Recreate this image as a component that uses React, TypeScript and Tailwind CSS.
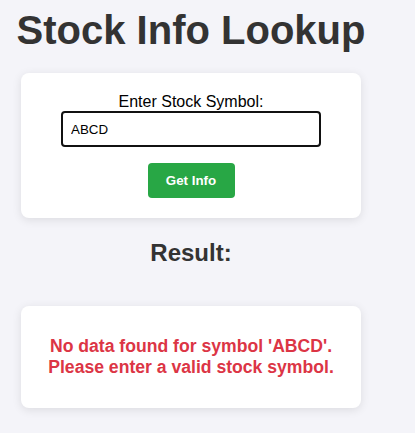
import { useState } from "react";

export default function App() {
  const [symbol, setSymbol] = useState("ABCD");

  return (
    <div className="min-h-[433px] bg-[#f4f4f9] font-['Liberation_Sans',Arial,sans-serif] text-[#333]">
      <div className="w-[382px] flex flex-col items-center pt-[7px]">
        <h1 className="text-[40px] leading-[46px] font-bold whitespace-nowrap text-[#333]">
          Stock Info Lookup
        </h1>

        {/* Lookup form */}
        <div className="mt-[20px] w-[340px] bg-white rounded-lg shadow-[0_2px_10px_rgba(0,0,0,0.1)] px-5 pt-5 pb-5 flex flex-col items-center">
          <label className="text-[16px] leading-[18px] text-black">Enter Stock Symbol:</label>
          <input
            autoFocus
            value={symbol}
            onChange={(e) => setSymbol(e.target.value)}
            className="mt-0 w-[260px] h-[36px] border-2 border-[#111] rounded-[4px] px-2 text-[13.33px] text-black outline-none bg-white"
          />
          <button className="mt-4 w-[87px] h-[35px] rounded-[4px] bg-[#28a745] text-white text-[13.33px] font-bold">
            Get Info
          </button>
        </div>

        <h2 className="mt-[21px] text-[24px] leading-[28px] font-bold text-[#333]">Result:</h2>

        {/* Result card */}
        <div className="mt-[39px] w-[340px] bg-white rounded-lg shadow-[0_2px_10px_rgba(0,0,0,0.1)] px-5 py-[30px] text-center">
          <p className="text-[17.6px] leading-[21px] font-bold text-[#dc3545]">
            No data found for symbol '{symbol}'.
            <br />
            Please enter a valid stock symbol.
          </p>
        </div>
      </div>
    </div>
  );
}
